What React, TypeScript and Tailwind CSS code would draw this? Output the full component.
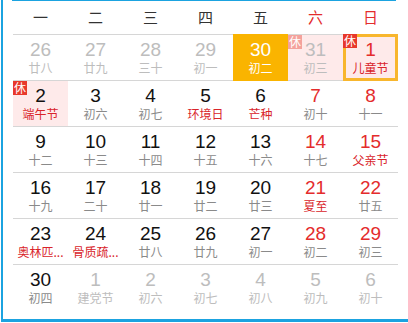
import React from "react";

type Day = {
  d: number;
  l: string;
  other?: boolean; // day from another month
  red?: boolean; // weekend number
  fest?: boolean; // festival / solar term text
  today?: boolean;
  rest?: "on" | "dim";
  pink?: boolean;
  ring?: boolean;
};

const weekdays = ["一", "二", "三", "四", "五", "六", "日"];

const rows: Day[][] = [
  [
    { d: 26, l: "廿八", other: true },
    { d: 27, l: "廿九", other: true },
    { d: 28, l: "三十", other: true },
    { d: 29, l: "初一", other: true },
    { d: 30, l: "初二", today: true },
    { d: 31, l: "初三", other: true, pink: true, rest: "dim" },
    { d: 1, l: "儿童节", red: true, fest: true, pink: true, ring: true, rest: "on" },
  ],
  [
    { d: 2, l: "端午节", fest: true, pink: true, rest: "on" },
    { d: 3, l: "初六" },
    { d: 4, l: "初七" },
    { d: 5, l: "环境日", fest: true },
    { d: 6, l: "芒种", fest: true },
    { d: 7, l: "初十", red: true },
    { d: 8, l: "十一", red: true },
  ],
  [
    { d: 9, l: "十二" },
    { d: 10, l: "十三" },
    { d: 11, l: "十四" },
    { d: 12, l: "十五" },
    { d: 13, l: "十六" },
    { d: 14, l: "十七", red: true },
    { d: 15, l: "父亲节", red: true, fest: true },
  ],
  [
    { d: 16, l: "十九" },
    { d: 17, l: "二十" },
    { d: 18, l: "廿一" },
    { d: 19, l: "廿二" },
    { d: 20, l: "廿三" },
    { d: 21, l: "夏至", red: true, fest: true },
    { d: 22, l: "廿五", red: true },
  ],
  [
    { d: 23, l: "奥林匹...", fest: true },
    { d: 24, l: "骨质疏...", fest: true },
    { d: 25, l: "廿八" },
    { d: 26, l: "廿九" },
    { d: 27, l: "初一" },
    { d: 28, l: "初二", red: true },
    { d: 29, l: "初三", red: true },
  ],
  [
    { d: 30, l: "初四" },
    { d: 1, l: "建党节", other: true },
    { d: 2, l: "初六", other: true },
    { d: 3, l: "初七", other: true },
    { d: 4, l: "初八", other: true },
    { d: 5, l: "初九", other: true },
    { d: 6, l: "初十", other: true },
  ],
];

function Cell({ day, last }: { day: Day; last: boolean }) {
  let num = "text-[#111]";
  let lunar = "text-[#8a8a8a]";
  if (day.red) num = "text-[#e42c2c]";
  if (day.fest) lunar = "text-[#d9242a]";
  if (day.other) {
    num = "text-[#bdbdbd]";
    lunar = "text-[#bdbdbd]";
  }
  if (day.today) {
    num = "text-white";
    lunar = "text-white";
  }

  const bg = day.today ? "bg-[#fab400]" : day.pink ? "bg-[#feeaea]" : "bg-white";
  const line = last ? "border-transparent" : day.today ? "border-[#fab400]" : "border-[#d6d6d6]";
  const lift = day.today || day.ring ? "-mt-px h-[47px] pt-[6px]" : "h-[46px] pt-[5px]";

  return (
    <div className={`relative w-[55px] border-b ${line} ${bg} ${lift} flex flex-col items-center`}>
      {day.ring && <div className="absolute inset-x-0 top-0 bottom-[-1px] border-[3px] border-[#f8b62d]" />}
      {day.rest && (
        <span
          className={`absolute left-0 top-0 w-[14px] h-[14px] flex items-center justify-center text-[12px] leading-none text-white font-['Noto_Sans_CJK_SC',sans-serif] ${
            day.rest === "on" ? "bg-[#e8382b]" : "bg-[#f4a29c]"
          }`}
        >
          休
        </span>
      )}
      <span className={`text-[19px] leading-[20px] font-['Liberation_Sans',Arial,sans-serif] ${num}`}>{day.d}</span>
      <span className={`text-[12px] leading-[16px] whitespace-nowrap font-['Noto_Sans_CJK_SC',sans-serif] ${lunar}`}>
        {day.l}
      </span>
    </div>
  );
}

export default function App() {
  return (
    <div className="w-[408px] h-[323px] bg-white pl-px">
      <div className="h-[322px] border-l-2 border-b-[3px] border-[#1ba3e0] pl-[10px]">
        {/* top rule */}
        <div className="ml-[-1px] w-[384px] h-px bg-[#1ba3e0]" />

        {/* weekday header */}
        <div className="flex w-[385px] h-[34px] border-b border-[#d6d6d6]">
          {weekdays.map((w, i) => (
            <div
              key={w}
              className={`w-[55px] flex items-center justify-center text-[15px] font-['Noto_Sans_CJK_SC',sans-serif] ${
                i >= 5 ? "text-[#e42c2c]" : "text-[#333]"
              }`}
            >
              {w}
            </div>
          ))}
        </div>

        {/* day grid */}
        {rows.map((row, r) => (
          <div key={r} className="flex items-start w-[385px]">
            {row.map((day, c) => (
              <Cell key={c} day={day} last={r === rows.length - 1} />
            ))}
          </div>
        ))}
      </div>
    </div>
  );
}
